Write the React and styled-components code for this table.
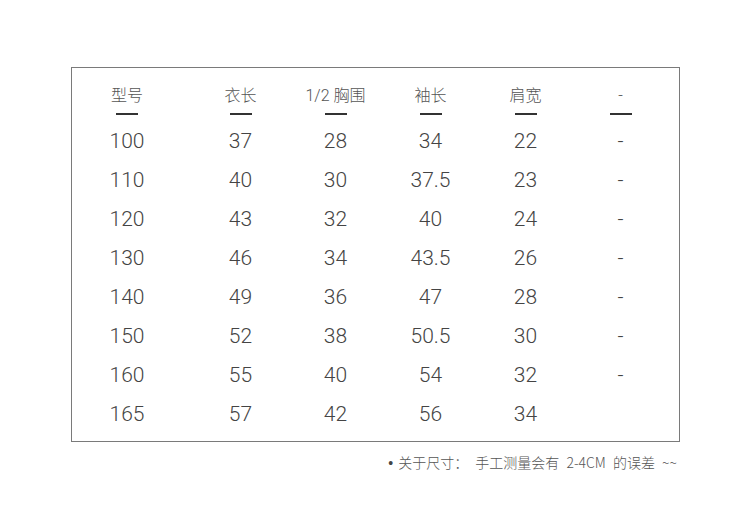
import React from 'react';
import styled, {createGlobalStyle} from "styled-components";

const GlobalStyle = createGlobalStyle`
    html, body {
        margin: 0;
        padding: 0;
        background: #fff;
    }
    body {
        font-family: "Noto Sans CJK SC", "Noto Sans", sans-serif;
        color: #444;
    }
`

const Page = styled.div`
    width: 750px;
    height: 520px;
    padding: 67px 0 0 71px;
    box-sizing: border-box;
`

const TableBox = styled.div`
    width: 609px;
    height: 375px;
    box-sizing: border-box;
    border: 1px solid #7a7a7a;
    padding-top: 15px;
    display: grid;
    grid-template-columns: 121px repeat(5, 95px);
    grid-auto-rows: 39px;
    align-content: start;
`

const HeadCell = styled.div`
    display: flex;
    flex-direction: column;
    align-items: center;
    width: ${props => props.$first ? '110px' : 'auto'};
    font-family: Roboto, "Noto Sans CJK SC", sans-serif;
    font-size: 16px;
    font-weight: 300;
    color: #555;
    line-height: 26px;
    height: 48px;
`

const Underline = styled.div`
    width: 22px;
    height: 2px;
    background: #333;
    margin-top: 4px;
`

const Cell = styled.div`
    width: ${props => props.$first ? '110px' : 'auto'};
    text-align: center;
    font-family: Roboto, "Noto Sans CJK SC", sans-serif;
    font-size: 21px;
    font-weight: 300;
    line-height: 39px;
    color: #444;
`

const Note = styled.div`
    width: 606px;
    margin-top: 10px;
    text-align: right;
    font-size: 14px;
    font-weight: 300;
    word-spacing: 4px;
    color: #555;
`

const Dot = styled.span`
    font-family: "Liberation Sans", sans-serif;
    font-size: 14px;
    color: #444;
    margin-right: 5px;
`

const headers = ['型号', '衣长', '1/2 胸围', '袖长', '肩宽', '-'];

const rows = [
    ['100', '37', '28', '34', '22', '-'],
    ['110', '40', '30', '37.5', '23', '-'],
    ['120', '43', '32', '40', '24', '-'],
    ['130', '46', '34', '43.5', '26', '-'],
    ['140', '49', '36', '47', '28', '-'],
    ['150', '52', '38', '50.5', '30', '-'],
    ['160', '55', '40', '54', '32', '-'],
    ['165', '57', '42', '56', '34', ''],
];

const App = () => (
    <Page>
        <GlobalStyle/>
        <TableBox>
            {headers.map((h, i) => (
                <HeadCell key={h} $first={i === 0}>
                    {h}
                    <Underline/>
                </HeadCell>
            ))}
            {rows.map((r, ri) => r.map((v, ci) => (
                <Cell key={ri + '-' + ci} $first={ci === 0}>{v}</Cell>
            )))}
        </TableBox>
        <Note><Dot>•</Dot>关于尺寸： 手工测量会有 2-4CM 的误差 ~~</Note>
    </Page>
);

export default App;
